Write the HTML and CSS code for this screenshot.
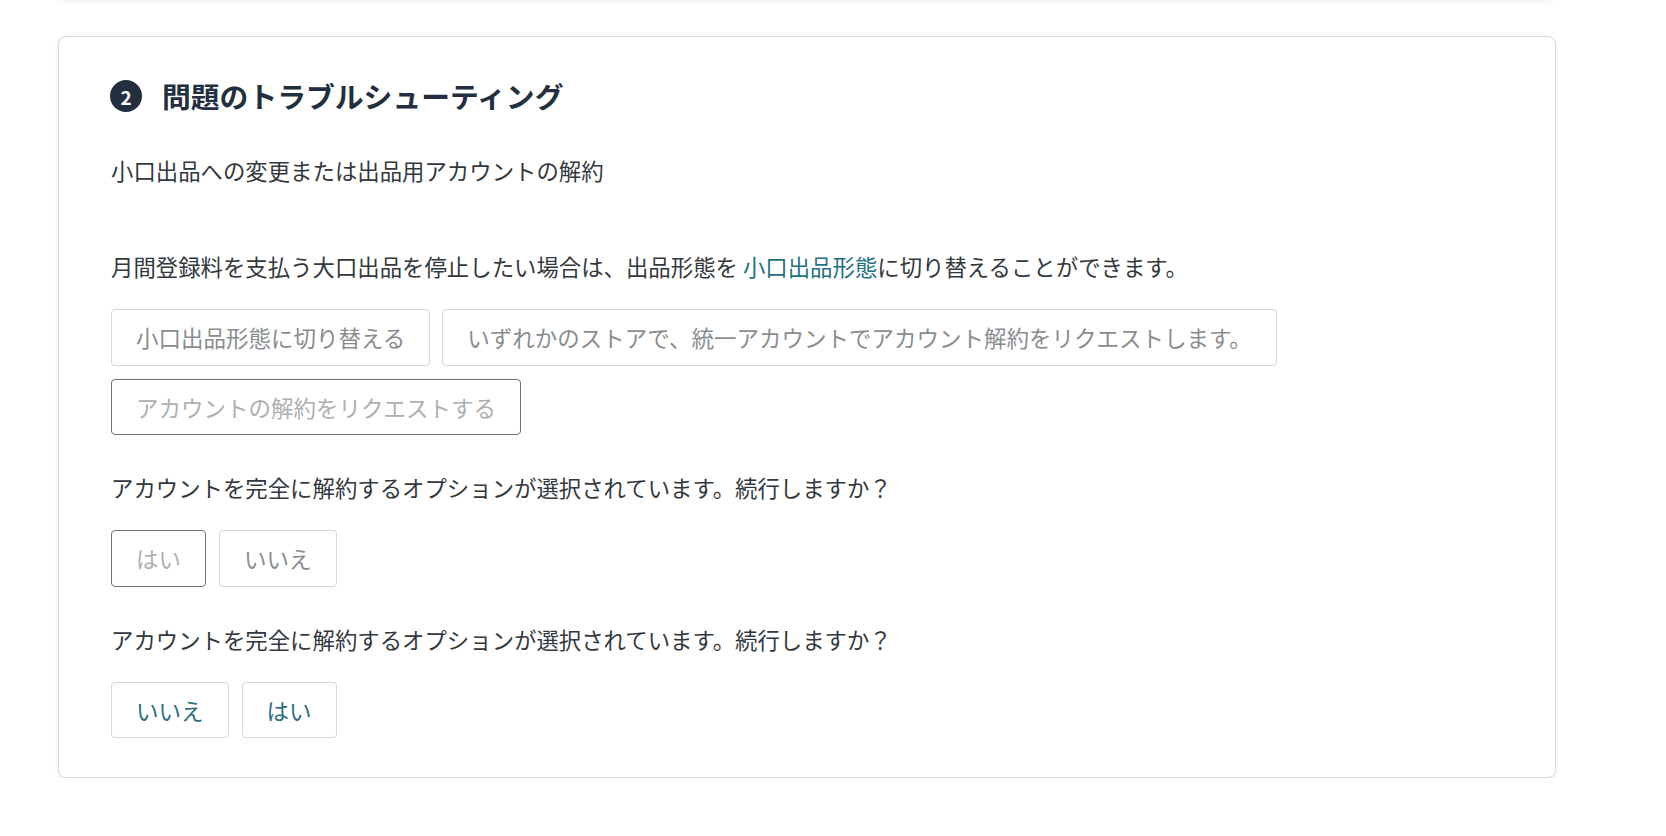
FILE: index.html
```html
<!DOCTYPE html>
<html lang="ja">
<head>
  <meta charset="UTF-8">
  <title>問題のトラブルシューティング</title>
  <link rel="stylesheet" href="styles.css">
</head>
<body>
  <div class="page">
    <div class="card card-prev"></div>

    <div class="card">
      <div class="step-title">
        <span class="step-badge">2</span>
        <h2>問題のトラブルシューティング</h2>
      </div>

      <p class="subtitle">小口出品への変更または出品用アカウントの解約</p>

      <p class="info">月間登録料を支払う大口出品を停止したい場合は、出品形態を <a href="#" class="link">小口出品形態</a>に切り替えることができます。</p>

      <div class="options">
        <button class="opt">小口出品形態に切り替える</button>
        <button class="opt">いずれかのストアで、統一アカウントでアカウント解約をリクエストします。</button>
        <button class="opt selected">アカウントの解約をリクエストする</button>
      </div>

      <p class="question">アカウントを完全に解約するオプションが選択されています。続行しますか？</p>
      <div class="options">
        <button class="opt selected">はい</button>
        <button class="opt">いいえ</button>
      </div>

      <p class="question">アカウントを完全に解約するオプションが選択されています。続行しますか？</p>
      <div class="options">
        <button class="opt active">いいえ</button>
        <button class="opt active">はい</button>
      </div>
    </div>
  </div>
</body>
</html>
```

FILE: styles.css
```css
body {
  margin: 0;
  padding: 0;
  background: #fff;
  color: #33383d;
  font-family: "Noto Sans CJK JP", "Noto Sans", sans-serif;
  font-size: 22.4px;
  overflow: hidden;
}

.page {
  padding-left: 58px;
}

.card {
  width: 1498px;
  box-sizing: border-box;
  margin-top: 37px;
  padding: 39px 52px 39px 52px;
  background: #fff;
  border: 1px solid #d5d9d9;
  border-radius: 8px;
  box-shadow: 0 1px 4px rgba(0, 0, 0, 0.08);
}

.card-prev {
  height: 20px;
  margin-top: -21px;
  padding: 0;
  box-shadow: 0 1px 6px rgba(0, 0, 0, 0.09);
}

.step-title {
  display: flex;
  align-items: center;
  height: 40px;
}

.step-badge {
  width: 32px;
  height: 32px;
  margin-left: -1px;
  border-radius: 50%;
  background: #232f3e;
  color: #fff;
  font-size: 19px;
  font-weight: bold;
  display: flex;
  align-items: center;
  justify-content: center;
  line-height: 1;
}

.step-title h2 {
  margin: 0 0 0 20px;
  font-size: 28.8px;
  font-weight: bold;
  color: #232f3e;
  line-height: 40px;
}

p {
  margin: 0;
  line-height: 32px;
}

.subtitle {
  margin-top: 38px;
}

.info {
  margin-top: 64px;
}

.link {
  color: #1f7080;
  text-decoration: none;
}

.options {
  display: flex;
  flex-wrap: wrap;
  gap: 13px 12px;
  margin-top: 27px;
}

.question {
  margin-top: 36px;
}

.opt {
  font-family: inherit;
  font-size: 22.5px;
  line-height: 32.5px;
  padding: 11px 24px;
  background: #fff;
  border: 1px solid #d5d9d9;
  border-radius: 4px;
  color: #8a8d8f;
  cursor: pointer;
}

.opt.selected {
  border-color: #6f7373;
  color: #abb0b3;
}

.opt.active {
  color: #2b6f7e;
}

.options .opt + .opt.active,
.options .opt.selected + .opt {
  margin-left: 1px;
}
```
